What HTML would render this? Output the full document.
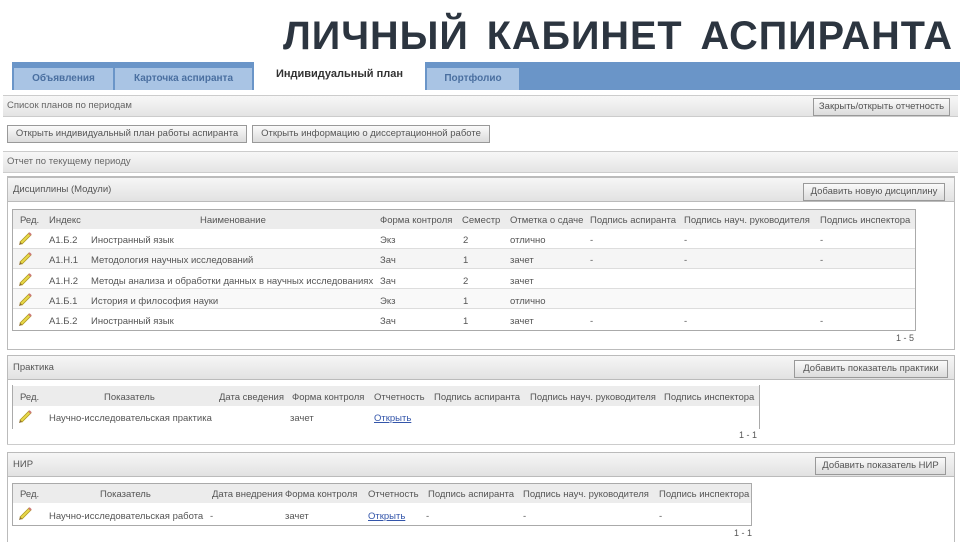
<!DOCTYPE html>
<html><head><meta charset="utf-8"><style>
*{margin:0;padding:0;box-sizing:border-box}
body{width:960px;height:540px;overflow:hidden;background:#fff;font-family:"Liberation Sans",sans-serif;font-size:9.5px;color:#555;position:relative}
.a{position:absolute;white-space:nowrap}
.title{left:283px;top:14px;font-size:40px;font-weight:bold;color:#2c3540;transform:scaleX(0.99);transform-origin:left top;letter-spacing:1px;word-spacing:6px}
.tabbar{left:12px;top:62px;width:948px;height:28px;background:#6a95c8}
.tab{top:68px;height:22px;background:#a9c4e4;color:#4a6fa0;font-weight:bold;font-size:10px;text-align:center;line-height:22px}
.atab{left:254px;top:60px;width:171px;height:32px;background:#fff;color:#333;font-weight:bold;font-size:11px;text-align:center;line-height:28px}
.bar{left:3px;width:955px;height:22px;background:linear-gradient(#f7f7f7,#e4e4e4);border-top:1px solid #ccc;border-bottom:1px solid #ccc;line-height:20px;padding-left:4px;color:#666}
.btn{height:18px;background:linear-gradient(#fafafa,#dcdcdc);border:1px solid #999;line-height:16px;text-align:center;color:#555;font-size:9.5px}
.panel{left:7px;width:948px;border:1px solid #bbb;background:#fff}
.ph{left:7px;width:948px;height:25px;background:linear-gradient(#f6f6f6,#e2e2e2);border:1px solid #bbb;line-height:24px;padding-left:5px;color:#555}
.tbl{border:1px solid #aaa;background:#fff}
.th{background:#ececec;height:19px}
.row{height:20px;border-bottom:1px solid #ddd}
a{color:#3355aa;text-decoration:underline}
</style></head><body>
<div class="a title">ЛИЧНЫЙ КАБИНЕТ АСПИРАНТА</div>
<div class="a tabbar"></div>
<div class="a tab" style="left:14px;width:99px">Объявления</div>
<div class="a tab" style="left:115px;width:137px">Карточка аспиранта</div>
<div class="a atab">Индивидуальный план</div>
<div class="a tab" style="left:427px;width:92px">Портфолио</div>

<div class="a bar" style="top:95px">Список планов по периодам</div>
<div class="a btn" style="left:813px;top:98px;width:137px">Закрыть/открыть отчетность</div>
<div class="a btn" style="left:7px;top:125px;width:240px">Открыть индивидуальный план работы аспиранта</div>
<div class="a btn" style="left:252px;top:125px;width:238px">Открыть информацию о диссертационной работе</div>
<div class="a bar" style="top:151px">Отчет по текущему периоду</div>

<div class="a panel" style="top:176px;height:174px"></div>
<div class="a ph" style="top:177px">Дисциплины (Модули)</div>
<div class="a btn" style="left:803px;top:183px;width:142px">Добавить новую дисциплину</div>
<div class="a tbl" style="left:12px;top:209px;width:904px;height:122px"></div>
<div class="a th" style="left:13px;top:210px;width:902px"></div>
<div class="a" style="left:20px;top:215px">Ред.</div>
<div class="a" style="left:49px;top:215px">Индекс</div>
<div class="a" style="left:200px;top:215px">Наименование</div>
<div class="a" style="left:380px;top:215px">Форма контроля</div>
<div class="a" style="left:462px;top:215px">Семестр</div>
<div class="a" style="left:510px;top:215px">Отметка о сдаче</div>
<div class="a" style="left:590px;top:215px">Подпись аспиранта</div>
<div class="a" style="left:684px;top:215px">Подпись науч. руководителя</div>
<div class="a" style="left:820px;top:215px">Подпись инспектора</div>
<div class="a" style="left:13px;top:229px;width:902px;height:101px">
 <div class="row" style="background:#fff"></div><div class="row" style="background:#f5f5f5"></div><div class="row"></div><div class="row" style="background:#f9f9f9"></div><div class="row" style="border:0"></div>
</div>
<div class="a" style="left:0;top:235px;width:960px">
<div class="a" style="left:49px;top:0">А1.Б.2</div><div class="a" style="left:91px;top:0">Иностранный язык</div><div class="a" style="left:380px;top:0">Экз</div><div class="a" style="left:463px;top:0">2</div><div class="a" style="left:510px;top:0">отлично</div><div class="a" style="left:590px;top:0">-</div><div class="a" style="left:684px;top:0">-</div><div class="a" style="left:820px;top:0">-</div>
<div class="a" style="left:49px;top:20px">А1.Н.1</div><div class="a" style="left:91px;top:20px">Методология научных исследований</div><div class="a" style="left:380px;top:20px">Зач</div><div class="a" style="left:463px;top:20px">1</div><div class="a" style="left:510px;top:20px">зачет</div><div class="a" style="left:590px;top:20px">-</div><div class="a" style="left:684px;top:20px">-</div><div class="a" style="left:820px;top:20px">-</div>
<div class="a" style="left:49px;top:41px">А1.Н.2</div><div class="a" style="left:91px;top:41px">Методы анализа и обработки данных в научных исследованиях</div><div class="a" style="left:380px;top:41px">Зач</div><div class="a" style="left:463px;top:41px">2</div><div class="a" style="left:510px;top:41px">зачет</div>
<div class="a" style="left:49px;top:61px">А1.Б.1</div><div class="a" style="left:91px;top:61px">История и философия науки</div><div class="a" style="left:380px;top:61px">Экз</div><div class="a" style="left:463px;top:61px">1</div><div class="a" style="left:510px;top:61px">отлично</div>
<div class="a" style="left:49px;top:81px">А1.Б.2</div><div class="a" style="left:91px;top:81px">Иностранный язык</div><div class="a" style="left:380px;top:81px">Зач</div><div class="a" style="left:463px;top:81px">1</div><div class="a" style="left:510px;top:81px">зачет</div><div class="a" style="left:590px;top:81px">-</div><div class="a" style="left:684px;top:81px">-</div><div class="a" style="left:820px;top:81px">-</div>
</div>
<svg class="a" style="left:18px;top:231px" width="16" height="100">
<defs><g id="p"><path d="M2 11 L11 2 L13 4 L4 13 Z" fill="#e8d84a" stroke="#b09a20" stroke-width="0.8"/><path d="M2 11 L1 14 L4 13 Z" fill="#8a6a30"/><path d="M11 2 L13 4" stroke="#c77" stroke-width="2"/></g></defs>
<use href="#p" y="0"/><use href="#p" y="20"/><use href="#p" y="41"/><use href="#p" y="61"/><use href="#p" y="81"/>
</svg>
<div class="a" style="left:896px;top:333px;font-size:9px">1 - 5</div>

<div class="a panel" style="top:355px;height:90px;border-bottom:none"></div>
<div class="a ph" style="top:355px">Практика</div>
<div class="a btn" style="left:794px;top:360px;width:154px">Добавить показатель практики</div>
<div class="a tbl" style="left:12px;top:385px;width:748px;height:44px;border-bottom:none;border-top:none"></div>
<div class="a th" style="left:13px;top:386px;width:746px;height:20px"></div>
<div class="a" style="left:20px;top:392px">Ред.</div>
<div class="a" style="left:104px;top:392px">Показатель</div>
<div class="a" style="left:219px;top:392px">Дата сведения</div>
<div class="a" style="left:292px;top:392px">Форма контроля</div>
<div class="a" style="left:374px;top:392px">Отчетность</div>
<div class="a" style="left:434px;top:392px">Подпись аспиранта</div>
<div class="a" style="left:530px;top:392px">Подпись науч. руководителя</div>
<div class="a" style="left:664px;top:392px">Подпись инспектора</div>
<svg class="a" style="left:18px;top:409px" width="16" height="16"><use href="#p"/></svg>
<div class="a" style="left:49px;top:413px">Научно-исследовательская практика</div>
<div class="a" style="left:290px;top:413px">зачет</div>
<div class="a" style="left:374px;top:413px"><a>Открыть</a></div>
<div class="a" style="left:739px;top:430px;font-size:9px">1 - 1</div>
<div class="a" style="left:7px;top:444px;width:948px;height:1px;background:#ccc"></div>

<div class="a panel" style="top:452px;height:90px;border-bottom:none"></div>
<div class="a ph" style="top:452px">НИР</div>
<div class="a btn" style="left:815px;top:457px;width:131px">Добавить показатель НИР</div>
<div class="a tbl" style="left:12px;top:483px;width:740px;height:43px"></div>
<div class="a th" style="left:13px;top:484px;width:738px;height:19px"></div>
<div class="a" style="left:20px;top:489px">Ред.</div>
<div class="a" style="left:100px;top:489px">Показатель</div>
<div class="a" style="left:212px;top:489px">Дата внедрения</div>
<div class="a" style="left:285px;top:489px">Форма контроля</div>
<div class="a" style="left:368px;top:489px">Отчетность</div>
<div class="a" style="left:428px;top:489px">Подпись аспиранта</div>
<div class="a" style="left:523px;top:489px">Подпись науч. руководителя</div>
<div class="a" style="left:659px;top:489px">Подпись инспектора</div>
<svg class="a" style="left:18px;top:506px" width="16" height="16"><use href="#p"/></svg>
<div class="a" style="left:49px;top:511px">Научно-исследовательская работа</div>
<div class="a" style="left:210px;top:511px">-</div>
<div class="a" style="left:285px;top:511px">зачет</div>
<div class="a" style="left:368px;top:511px"><a>Открыть</a></div>
<div class="a" style="left:426px;top:511px">-</div>
<div class="a" style="left:523px;top:511px">-</div>
<div class="a" style="left:659px;top:511px">-</div>
<div class="a" style="left:734px;top:528px;font-size:9px">1 - 1</div>
</body></html>
